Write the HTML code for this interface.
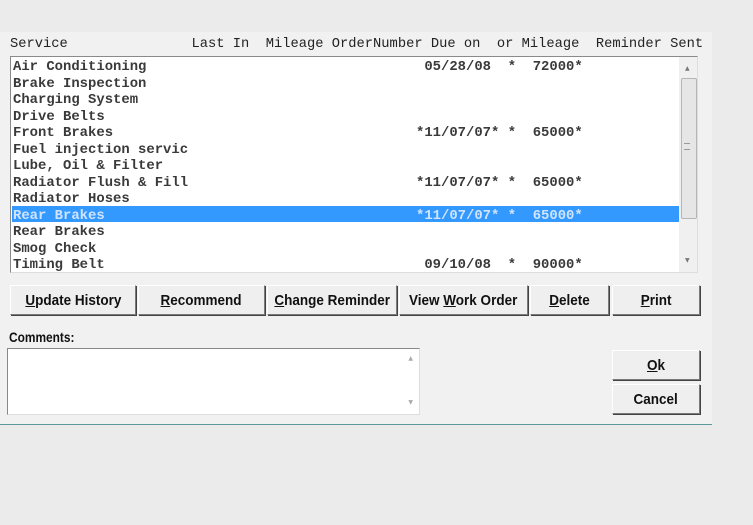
<!DOCTYPE html>
<html><head><style>
body{margin:0;width:753px;height:525px;background:#ebebeb;position:relative;overflow:hidden;font-family:"Liberation Mono",monospace}
#dlg{position:absolute;left:0;top:32px;width:712px;height:392px;background:#f1f1f1;border-bottom:1px solid #5a9a9a}
.m{position:absolute;font-size:13.9px;font-weight:bold;color:#3a3a3a;white-space:pre;line-height:16px}
#lb{position:absolute;left:10px;top:24px;width:686px;height:215px;background:#fff;border:1px solid #8a8a8a;border-right-color:#ddd;border-bottom-color:#ddd}
#sel{position:absolute;left:1px;top:149px;width:667px;height:16px;background:#3399ff}
#sb{position:absolute;right:0;top:0;width:18px;height:215px;background:#f0f0f0}
#th{position:absolute;left:2px;top:21px;width:14px;height:139px;background:#e6e6e6;border:1px solid #b5b5b5;border-radius:2px}
.btn{position:absolute;top:253px;height:30px;background:#efefef;border:1px solid #fff;border-right-color:#7a7a7a;border-bottom-color:#7a7a7a;box-shadow:1px 1px 0 #444;font-family:"Liberation Sans",sans-serif;font-weight:bold;font-size:15px;text-align:center;line-height:30px;color:#111;box-sizing:border-box;white-space:nowrap}
.btn span,.lbl span{display:inline-block;transform:scaleX(0.9)}
.btn u{text-decoration:underline}
</style></head><body>
<div id="dlg">
<div class="m" style="left:10px;top:5px;font-weight:normal;color:#222;font-size:13.75px">Service               Last In  Mileage OrderNumber Due on  or Mileage  Reminder Sent</div>
<div id="lb">
<div id="sel"></div>
<div class="m" style="left:2px;top:2px;line-height:16.5px">Air Conditioning
Brake Inspection
Charging System
Drive Belts
Front Brakes
Fuel injection servic
Lube, Oil &amp; Filter
Radiator Flush &amp; Fill
Radiator Hoses
<span style="color:#cfe4ff">Rear Brakes</span>
Rear Brakes
Smog Check
Timing Belt</div>
<div class="m" style="left:405px;top:2px;line-height:16.5px"><span> 05/28/08  *  72000*</span>



*11/07/07* *  65000*


*11/07/07* *  65000*

<span style="color:#cfe4ff">*11/07/07* *  65000*</span>


 09/10/08  *  90000*</div>
<div id="sb"><div id="th"></div>
<div style="position:absolute;left:6px;top:8px;font-size:6px;color:#777;font-family:'DejaVu Sans'">▲</div>
<div style="position:absolute;left:5px;top:86px;width:6px;height:5px;border-top:1px solid #999;border-bottom:1px solid #999"></div>
<div style="position:absolute;left:6px;top:200px;font-size:6px;color:#777;font-family:'DejaVu Sans'">▼</div>
</div>
</div>
<div class="btn" style="left:10px;width:126px"><span><u>U</u>pdate History</span></div>
<div class="btn" style="left:138px;width:127px"><span><u>R</u>ecommend</span></div>
<div class="btn" style="left:267px;width:130px"><span><u>C</u>hange Reminder</span></div>
<div class="btn" style="left:399px;width:129px"><span>View <u>W</u>ork Order</span></div>
<div class="btn" style="left:530px;width:79px"><span><u>D</u>elete</span></div>
<div class="btn" style="left:612px;width:88px"><span><u>P</u>rint</span></div>
<div class="lbl" style="position:absolute;left:9px;top:297px;font-family:'Liberation Sans',sans-serif;font-weight:bold;font-size:14px;color:#111"><span style="transform:scaleX(0.85);transform-origin:left">Comments:</span></div>
<div style="position:absolute;left:7px;top:316px;width:411px;height:65px;background:#fff;border:1px solid #888;border-right-color:#ddd;border-bottom-color:#ddd">
<div style="position:absolute;right:6px;top:6px;font-size:6px;color:#aaa;font-family:'DejaVu Sans'">▲</div>
<div style="position:absolute;right:6px;top:50px;font-size:6px;color:#aaa;font-family:'DejaVu Sans'">▼</div>
</div>
<div class="btn" style="left:612px;top:318px;width:88px"><span><u>O</u>k</span></div>
<div class="btn" style="left:612px;top:352px;width:88px"><span>Cancel</span></div>
</div>
</body></html>
